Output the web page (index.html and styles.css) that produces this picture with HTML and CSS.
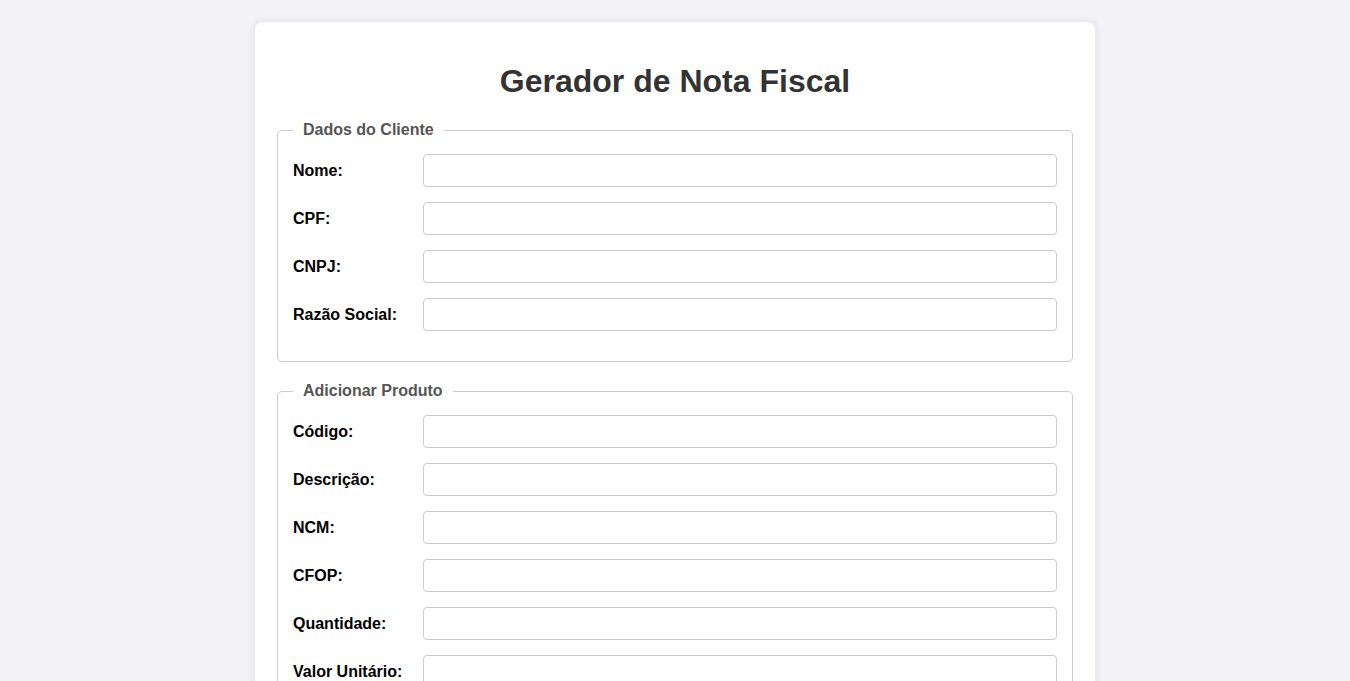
FILE: index.html
```html
<!DOCTYPE html>
<html lang="pt-BR">
<head>
<meta charset="UTF-8">
<title>Gerador de Nota Fiscal</title>
<link rel="stylesheet" href="styles.css">
</head>
<body>
<div class="container">
  <h1 class="title">Gerador de Nota Fiscal</h1>
  <fieldset class="group">
    <legend class="group-legend">Dados do Cliente</legend>
    <div class="row"><label class="label">Nome:</label><input class="field" type="text"></div>
    <div class="row"><label class="label">CPF:</label><input class="field" type="text"></div>
    <div class="row"><label class="label">CNPJ:</label><input class="field" type="text"></div>
    <div class="row"><label class="label">Razão Social:</label><input class="field" type="text"></div>
  </fieldset>
  <fieldset class="group">
    <legend class="group-legend">Adicionar Produto</legend>
    <div class="row"><label class="label">Código:</label><input class="field" type="text"></div>
    <div class="row"><label class="label">Descrição:</label><input class="field" type="text"></div>
    <div class="row"><label class="label">NCM:</label><input class="field" type="text"></div>
    <div class="row"><label class="label">CFOP:</label><input class="field" type="text"></div>
    <div class="row"><label class="label">Quantidade:</label><input class="field" type="text"></div>
    <div class="row"><label class="label">Valor Unitário:</label><input class="field" type="text"></div>
    <button class="btn" type="button">Adicionar Produto</button>
  </fieldset>
</div>
</body>
</html>
```
FILE: styles.css
```css
html, body {
  margin: 0;
}
body {
  background: #f4f4f8;
  font-family: "Liberation Sans", Arial, sans-serif;
  padding: 22px 0 20px;
}
.container {
  width: 800px;
  margin: 0 auto;
  padding: 20px;
  background: #fff;
  border-radius: 8px;
  box-shadow: 0 0 10px rgba(0, 0, 0, 0.1);
}
.title {
  text-align: center;
  color: #333;
  font-size: 32px;
  font-weight: bold;
  margin: 21px 0 21px;
  line-height: 37px;
}
.group {
  margin: 0 2px 20px;
  padding: 0 15px 15px;
  border: 1px solid #ccc;
  border-radius: 5px;
}
.group-legend {
  padding: 0 10px;
  font-size: 16px;
  font-weight: bold;
  color: #555;
  line-height: 18px;
  margin-bottom: 15px;
}
.row {
  display: flex;
  align-items: center;
  margin-bottom: 15px;
}
.label {
  width: 130px;
  flex: none;
  font-size: 16px;
  font-weight: bold;
  color: #000;
}
.field {
  flex: 1;
  box-sizing: border-box;
  height: 33px;
  padding: 8px;
  border: 1px solid #ccc;
  border-radius: 4px;
  font-size: 14px;
  font-family: inherit;
}
.btn {
  padding: 10px 20px;
  background: #4caf50;
  color: #fff;
  border: none;
  border-radius: 4px;
  font-size: 16px;
  font-family: inherit;
}
```
